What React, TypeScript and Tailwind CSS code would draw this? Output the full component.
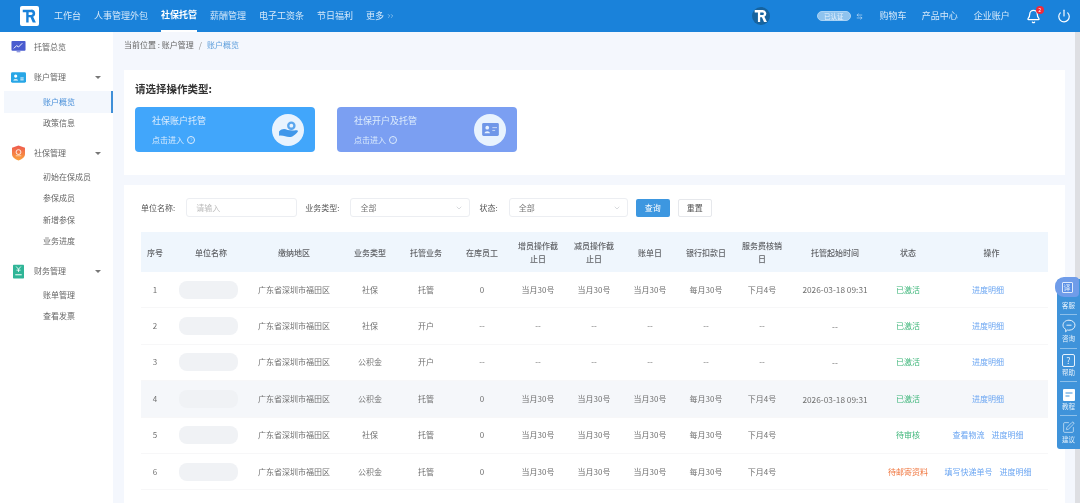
import { Bell, Power, ChevronDown, ArrowLeftRight, ChevronRight, SquarePen } from "lucide-react";

const navItems = ["工作台", "人事管理外包", "社保托管", "薪酬管理", "电子工资条", "节日福利"];

const columns = [
  "序号", "单位名称", "缴纳地区", "业务类型", "托管业务", "在库员工", "增员操作截止日", "减员操作截止日",
  "账单日", "银行扣款日", "服务费核销日", "托管起始时间", "状态", "操作",
];

const rows = [
  { id: 1, type: "社保", biz: "托管", filled: true, time: "2026-03-18 09:31", status: "已激活", tone: "green", ops: ["进度明细"] },
  { id: 2, type: "社保", biz: "开户", filled: false, time: "--", status: "已激活", tone: "green", ops: ["进度明细"] },
  { id: 3, type: "公积金", biz: "开户", filled: false, time: "--", status: "已激活", tone: "green", ops: ["进度明细"] },
  { id: 4, type: "公积金", biz: "托管", filled: true, time: "2026-03-18 09:31", status: "已激活", tone: "green", ops: ["进度明细"] },
  { id: 5, type: "社保", biz: "托管", filled: true, time: "", status: "待审核", tone: "green", ops: ["查看物流", "进度明细"] },
  { id: 6, type: "公积金", biz: "托管", filled: true, time: "", status: "待邮寄资料", tone: "orange", ops: ["填写快递单号", "进度明细"] },
];

const gridCols = "grid grid-cols-[28px_84px_89px_56px_56px_56px_56px_56px_56px_56px_56px_90px_56px_111px]";

function Caret() {
  return <span className="ml-auto mr-[12px] h-0 w-0 border-x-[3px] border-t-[3px] border-x-transparent border-t-[#777]" />;
}

function RLogo({ fg, accent }: { fg: string; accent: string }) {
  return (
    <svg viewBox="0 0 20 20" className="h-full w-full">
      <path d="M1 1.500h11.500a5 5 0 0 1 2.400 9.400L18.500 18.500h-4.200l-3-6.800H8.800v6.800H5.600V5H1z" fill={fg} />
      <path d="M8.800 5h3.500a1.800 1.800 0 0 1 0 3.600H8.800z" fill={accent} />
    </svg>
  );
}

function SideGroup({ icon, label }: { icon: React.ReactNode; label: string }) {
  return (
    <div className="flex h-[20px] items-center pl-[11px] text-[8px] text-[#666]">
      <span className="flex w-[23px] shrink-0 items-center">{icon}</span>
      {label}
    </div>
  );
}

function SideLink({ label, active }: { label: string; active?: boolean }) {
  return (
    <div
      className={`ml-[4px] flex h-[21.5px] items-center pl-[39px] text-[8px] ${
        active ? "border-r-2 border-[#3f8fd8] bg-[#f3f7fd] text-[#4a90d9]" : "text-[#666]"
      }`}
    >
      {label}
    </div>
  );
}

function Sidebar() {
  return (
    <aside className="w-[113px] shrink-0 bg-white pt-[5px]">
      <SideGroup
        label="托管总览"
        icon={
          <svg viewBox="0 0 16 14" className="h-[14px] w-[15px]">
            <rect x="0.5" y="0.5" width="15" height="10.5" rx="1" fill="#4a5ccf" />
            <path d="M3 8.5 6 5.5l2 1.5 4-4" stroke="#fff" strokeWidth="1" fill="none" />
            <path d="M6 12h4" stroke="#8c97e0" strokeWidth="1.4" />
          </svg>
        }
      />
      <div className="mt-[10px]">
        <SideGroup
          label="账户管理"
          icon={
            <svg viewBox="0 0 16 11" className="h-[11px] w-[15px]">
              <rect width="16" height="11" rx="1.5" fill="#27a6e6" />
              <circle cx="5" cy="4" r="1.7" fill="#fff" />
              <path d="M2.4 8.8c.4-2 4.8-2 5.2 0z" fill="#fff" />
              <path d="M10 6h3.5M10 8h3.5" stroke="#fff" strokeWidth="1" />
            </svg>
          }
        />
      </div>
      <div className="relative -mt-[20px] flex h-[20px] items-center"><Caret /></div>
      <div className="mt-[4px]">
        <SideLink label="账户概览" active />
        <SideLink label="政策信息" />
      </div>
      <div className="mt-[9px]">
        <SideGroup
          label="社保管理"
          icon={
            <svg viewBox="0 0 14 16" className="ml-[1px] h-[16px] w-[13px]">
              <defs>
                <linearGradient id="shield" x1="0" y1="0" x2="0" y2="1">
                  <stop offset="0" stopColor="#ee5a4f" />
                  <stop offset="1" stopColor="#fba23c" />
                </linearGradient>
              </defs>
              <path d="M7 0l7 2.4V9c0 3.4-3.4 5.8-7 7-3.6-1.2-7-3.6-7-7V2.4z" fill="url(#shield)" />
              <circle cx="7" cy="7" r="2.6" fill="none" stroke="#fff" strokeWidth="0.9" />
              <path d="M4 11h6" stroke="#ffe2b8" strokeWidth="0.9" />
            </svg>
          }
        />
      </div>
      <div className="relative -mt-[20px] flex h-[20px] items-center"><Caret /></div>
      <div className="mt-[3px]">
        <SideLink label="初始在保成员" />
        <SideLink label="参保成员" />
        <SideLink label="新增参保" />
        <SideLink label="业务进度" />
      </div>
      <div className="mt-[9px]">
        <SideGroup
          label="财务管理"
          icon={
            <svg viewBox="0 0 12 15" className="ml-[2px] h-[15px] w-[11px]">
              <rect width="12" height="15" rx="0.8" fill="#2fb597" />
              <path d="M3.4 2 6 5l2.6-3M6 5v3M3.8 6h4.4" stroke="#fff" strokeWidth="0.9" fill="none" />
              <path d="M2.5 11h7" stroke="#cdf0e6" strokeWidth="1.4" />
            </svg>
          }
        />
      </div>
      <div className="relative -mt-[20px] flex h-[20px] items-center"><Caret /></div>
      <div className="mt-[3px]">
        <SideLink label="账单管理" />
        <SideLink label="查看发票" />
      </div>
    </aside>
  );
}

function Header() {
  return (
    <header className="flex h-[32px] shrink-0 items-center bg-[#1a82da] text-[9px] text-[#d5e8fa]">
      <div className="ml-[20px] mr-[15px] h-[20px] w-[19px] rounded-[2px] bg-white p-[2px]">
        <RLogo fg="#1a82da" accent="#fff" />
      </div>
      <nav className="flex h-full gap-[13px]">
        {navItems.map((item) => (
          <span
            key={item}
            className={`flex h-full items-center ${
              item === "社保托管" ? "border-b-2 border-white font-bold text-white" : ""
            }`}
          >
            {item}
          </span>
        ))}
        <span className="flex items-center gap-[2px]">
          更多
          <span className="flex">
            <ChevronRight size={6} strokeWidth={2} />
            <ChevronRight size={6} strokeWidth={2} className="-ml-[3px]" />
          </span>
        </span>
      </nav>
      <div className="ml-[357px] h-[18px] w-[18px] rounded-full bg-[#16639f] p-[2px]">
        <RLogo fg="#fff" accent="#16639f" />
      </div>
      <span className="ml-[47px] rounded-full border border-[#a9d2f4] bg-[#8fc3ee] px-[6px] text-[6.5px] leading-[8px] text-[#e8f3fd]">
        已认证
      </span>
      <ArrowLeftRight size={7} className="ml-[5px]" />
      <span className="ml-[17px]">购物车</span>
      <span className="ml-[15px]">产品中心</span>
      <span className="ml-[16px]">企业账户</span>
      <span className="relative ml-[16px]">
        <Bell size={15} className="text-white" />
        <span className="absolute -right-[3px] -top-[3px] flex h-[8px] w-[8px] items-center justify-center rounded-full bg-[#ee2b3b] text-[5px] text-white">
          2
        </span>
      </span>
      <Power size={14} className="ml-[16px] text-white" />
    </header>
  );
}

function HeroCard({ title, tone, icon }: { title: string; tone: string; icon: React.ReactNode }) {
  return (
    <div className={`flex h-[45px] w-[180px] items-center justify-between rounded-[4px] pl-[17px] pr-[11px] text-[#dcecfd] ${tone}`}>
      <div>
        <div className="text-[9px] leading-[14px]">{title}</div>
        <div className="mt-[6px] flex items-center gap-[3px] text-[8px] leading-[11px]">
          点击进入
          <span className="flex h-[8px] w-[8px] items-center justify-center rounded-full border border-[#dcecfd]">
            <ChevronRight size={5} />
          </span>
        </div>
      </div>
      <div className="flex h-[32px] w-[32px] items-center justify-center rounded-full bg-[#e8f3fe]">{icon}</div>
    </div>
  );
}

function Field({ label, value, width, select, placeholder }: { label: string; value: string; width: string; select?: boolean; placeholder?: boolean }) {
  return (
    <>
      <span className="text-[8px] text-[#555]">{label}</span>
      <div className={`flex h-[19px] items-center justify-between rounded-[3px] border border-[#eceef2] pl-[9px] pr-[6px] text-[8px] ${width} ${placeholder ? "text-[#bbb]" : "text-[#777]"}`}>
        {value}
        {select && <ChevronDown size={8} className="text-[#c4c7cc]" />}
      </div>
    </>
  );
}

function Table() {
  return (
    <div className="mt-[15px] text-center text-[8px] text-[#707070]">
      <div className={`${gridCols} h-[40px] items-center bg-[#eff6fd] font-medium leading-[13px] text-[#606266]`}>
        {columns.map((col, i) => (
          <div key={col} className={i < 2 ? "" : i === 2 ? "pr-[7px]" : "px-[7px]"}>
            {col}
          </div>
        ))}
      </div>
      {rows.map((row) => {
        const val = (text: string) => (row.filled ? text : "--");
        return (
          <div
            key={row.id}
            className={`${gridCols} h-[36.4px] items-center border-b border-[#f7f7f8] ${row.id === 4 ? "bg-[#f5f7fa]" : ""}`}
          >
            <div>{row.id}</div>
            <div className="flex justify-center pr-[5px]">
              <div className="h-[18px] w-[59px] rounded-[8px] bg-[#f0f2f5]" />
            </div>
            <div className="pr-[7px]">广东省深圳市福田区</div>
            <div>{row.type}</div>
            <div>{row.biz}</div>
            <div>{val("0")}</div>
            <div>{val("当月30号")}</div>
            <div>{val("当月30号")}</div>
            <div>{val("当月30号")}</div>
            <div>{val("每月30号")}</div>
            <div>{val("下月4号")}</div>
            <div className="text-[8.3px]">{row.time}</div>
            <div className={`whitespace-nowrap ${row.tone === "orange" ? "text-[#f0743c]" : "text-[#3eb67a]"}`}>{row.status}</div>
            <div className="flex justify-center gap-[7px] whitespace-nowrap pr-[7px] text-[#6aa5f2]">
              {row.ops.map((op) => (
                <span key={op}>{op}</span>
              ))}
            </div>
          </div>
        );
      })}
    </div>
  );
}

function FloatPanel() {
  const items: { label: string; icon: React.ReactNode }[] = [
    {
      label: "咨询",
      icon: (
        <svg viewBox="0 0 14 14" className="h-[14px] w-[14px]" fill="none" stroke="currentColor" strokeWidth="1">
          <path d="M7 1.2c3.400 0 6 2.200 6 5s-2.600 5-6 5c-.6 0-1 0-1.500-.2L3.600 12.800l.2-2.400C2.100 9.500 1 8 1 6.200c0-2.800 2.600-5 6-5z" />
          <path d="M4.500 6.200h5" />
        </svg>
      ),
    },
    {
      label: "帮助",
      icon: (
        <span className="flex h-[13px] w-[13px] items-center justify-center rounded-[2px] border border-[#e6f2fc] text-[9px] leading-none">
          ?
        </span>
      ),
    },
    {
      label: "教程",
      icon: (
        <svg viewBox="0 0 12 12" className="h-[12px] w-[12px]">
          <rect width="12" height="12" rx="1" fill="#fff" />
          <path d="M2.500 4h7M2.500 7h4" stroke="#3f93da" strokeWidth="1" />
        </svg>
      ),
    },
    { label: "建议", icon: <SquarePen size={13} strokeWidth={1.2} /> },
  ];
  return (
    <div className="absolute right-0 top-[279px] w-[23px] rounded-l-[3px] bg-[#3f93da] text-center text-[6.5px] leading-[9px] text-[#e6f2fc]">
      <div className="absolute -left-[2px] -top-[2px] flex h-[20px] w-[24px] items-center justify-center rounded-l-[9px] rounded-r-[4px] bg-[#6f9ce9]">
        <span className="flex h-[11px] w-[11px] items-center justify-center rounded-[1px] border border-[#dfeafc] bg-[#5b8fe6] text-[7px] leading-none">
          译
        </span>
      </div>
      <div className="flex h-[35px] items-end justify-center pb-[4px]">客服</div>
      {items.map((item) => (
        <div key={item.label} className="mx-[3px] flex h-[33.7px] flex-col items-center justify-end border-t border-[#8dc0ea] pb-[4.5px]">
          {item.icon}
          <span className="mt-[1px]">{item.label}</span>
        </div>
      ))}
    </div>
  );
}

export default function App() {
  return (
    <div className="relative flex h-[503px] w-[1080px] flex-col overflow-hidden bg-[#f4f7fd] font-['Noto_Sans_CJK_SC','Noto_Sans',sans-serif] blur-[0.5px]">
      <Header />
      <div className="flex min-h-0 flex-1">
        <Sidebar />
        <main className="min-w-0 flex-1 pl-[11px] pr-[10px]">
          <div className="flex h-[26px] items-center text-[8px] text-[#666]">
            当前位置 : 账户管理
            <span className="mx-[5px] text-[#888]">/</span>
            <span className="text-[#5f9fdc]">账户概览</span>
          </div>
          <section className="mt-[12px] h-[105px] bg-white px-[11px] pt-[11px]">
            <h2 className="text-[10.5px] font-bold leading-[16px] text-[#333]">请选择操作类型:</h2>
            <div className="mt-[10px] flex gap-[22px]">
              <HeroCard
                title="社保账户托管"
                tone="bg-[#41a6fb]"
                icon={
                  <svg viewBox="0 0 22 18" className="h-[17px] w-[21px]">
                    <circle cx="14" cy="5" r="4.5" fill="#5aa6ee" />
                    <circle cx="14" cy="5" r="2" fill="#e8f3fe" />
                    <path d="M1 11c3-3 6-3 9-1.500l5 .5c2 0 6-1 6 .5S16 17 12 17c-4 0-6-2-11-1.500z" fill="#3f97ea" />
                  </svg>
                }
              />
              <HeroCard
                title="社保开户及托管"
                tone="bg-[#7b9ff2]"
                icon={
                  <svg viewBox="0 0 18 14" className="h-[13px] w-[17px]">
                    <rect width="18" height="14" rx="1.500" fill="#6f97e8" />
                    <circle cx="5.500" cy="5" r="2" fill="#e8f3fe" />
                    <path d="M2.500 11c.4-3 5.600-3 6 0z" fill="#e8f3fe" />
                    <path d="M11 5h5M11 8h3" stroke="#cfe0fa" strokeWidth="1" />
                  </svg>
                }
              />
            </div>
          </section>
          <section className="mt-[10px] bg-white px-[17px] pb-[40px] pt-[13px]">
            <div className="flex h-[19px] items-center">
              <Field label="单位名称:" value="请输入" width="ml-[11px] w-[111px]" placeholder />
              <div className="ml-[8px]" />
              <Field label="业务类型:" value="全部" width="ml-[11px] w-[120px]" select />
              <div className="ml-[9px]" />
              <Field label="状态:" value="全部" width="ml-[11px] w-[119px]" select />
              <button className="ml-[8px] h-[18px] w-[34px] rounded-[2px] bg-[#3d97e0] text-[8px] text-white">查询</button>
              <button className="ml-[8px] h-[18px] w-[34px] rounded-[2px] border border-[#e6e8ec] text-[8px] text-[#555]">重置</button>
            </div>
            <Table />
          </section>
        </main>
        <div className="w-[5px] shrink-0 bg-[#dedfe3]" />
      </div>
      <FloatPanel />
    </div>
  );
}
